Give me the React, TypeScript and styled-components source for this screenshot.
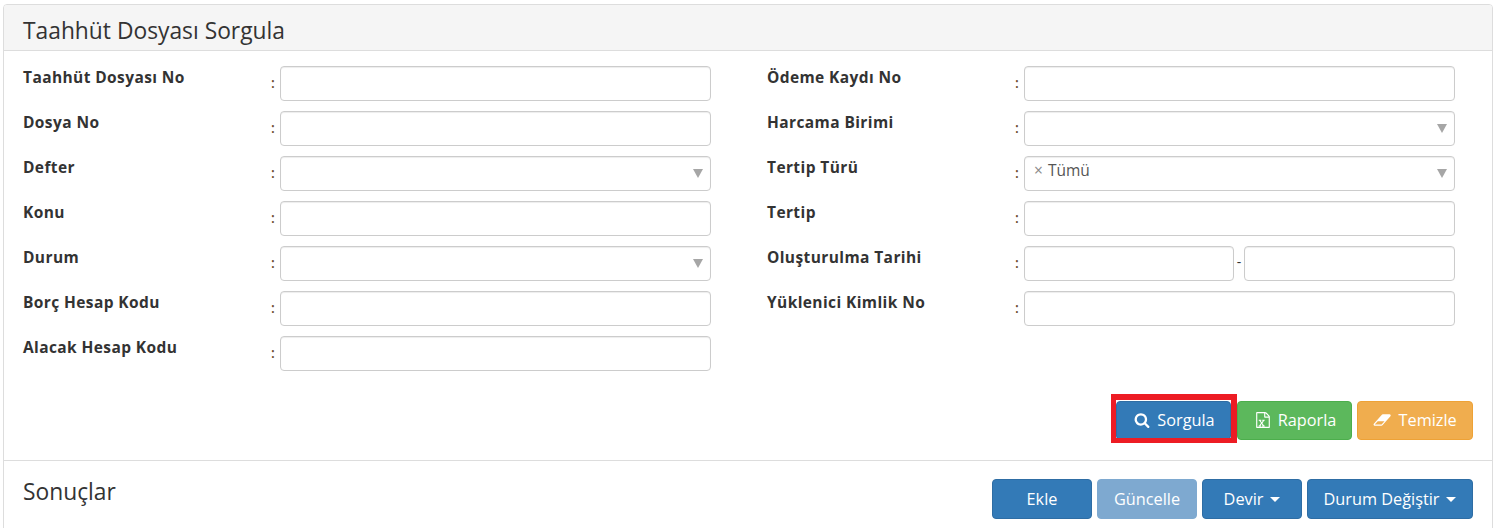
import React from "react";
import styled, { createGlobalStyle } from "styled-components";

const Global = createGlobalStyle`
  html, body { margin: 0; padding: 0; background: #fff; }
  body { font-family: "Open Sans", sans-serif; font-size: 14px; color: #333; overflow: hidden; }
  * { box-sizing: border-box; }
`;

const Panel = styled.div`
  width: 1490px;
  height: 540px;
  margin: 4px 0 0 3px;
  border: 1px solid #ddd;
  border-radius: 4px 4px 0 0;
  background: #fff;
`;
const Heading = styled.div`
  height: 46px;
  padding: 10px 19px 0;
  background: #f5f5f5;
  border-bottom: 1px solid #ddd;
  border-radius: 3px 3px 0 0;
`;
const Title = styled.h3`
  margin: 0;
  font-size: 22.8px;
  line-height: 32px;
  font-weight: 400;
  color: #333;
`;
const FormGrid = styled.div`
  display: grid;
  grid-template-columns: 744px 725px;
  padding: 15px 0 0 19px;
  height: 350px;
`;
const Column = styled.div`
  display: flex;
  flex-direction: column;
  gap: 10px;
`;
const Row = styled.div`
  display: flex;
  align-items: flex-start;
  height: 35px;
`;
const Label = styled.label`
  width: 248px;
  font-size: 15.5px;
  letter-spacing: 0.4px;
  font-weight: 700;
  line-height: 20px;
  padding-top: 1px;
  color: #333;
`;
const Colon = styled.span`
  width: 9px;
  font-size: 14px;
  font-weight: 600;
  line-height: 20px;
  padding-top: 7px;
  color: #6b4a2f;
`;
const Input = styled.div<{ $w?: number }>`
  position: relative;
  flex: 0 0 ${(p) => p.$w ?? 431}px;
  height: 35px;
  border: 1px solid #ccc;
  border-radius: 4px;
  background: #fff;
  box-shadow: inset 0 1px 1px rgba(0, 0, 0, 0.075);
`;
const Arrow = styled.span`
  position: absolute;
  right: 7px;
  top: 12px;
  width: 0;
  height: 0;
  border-left: 5px solid transparent;
  border-right: 5px solid transparent;
  border-top: 9px solid #a6a6a6;
`;
const Tag = styled.span`
  position: absolute;
  left: 9px;
  top: 3px;
  font-size: 15.5px;
  line-height: 20px;
  color: #555;
`;
const TagX = styled.span`
  color: #888;
  margin-right: 5px;
`;
const Dash = styled.span`
  flex: 0 0 10px;
  text-align: center;
  line-height: 20px;
  padding-top: 6px;
  font-size: 14px;
  color: #333;
`;
const Actions = styled.div`
  display: flex;
  justify-content: flex-end;
  gap: 5px;
  padding-right: 19px;
  height: 60px;
  border-bottom: 1px solid #ddd;
`;
const Button = styled.button<{ $bg: string; $line: string; $w: number; $tall?: boolean; $shift?: number }>`
  display: inline-flex;
  align-items: center;
  justify-content: center;
  gap: 7px;
  width: ${(p) => p.$w}px;
  height: ${(p) => (p.$tall ? 40 : 39)}px;
  padding: 0 0 ${(p) => (p.$tall ? 0 : 2)}px ${(p) => p.$shift ?? 0}px;
  background: ${(p) => p.$bg};
  border: 1px solid ${(p) => p.$line};
  border-radius: 4px;
  color: #fff;
  font-family: "Open Sans", sans-serif;
  font-size: 16.3px;
  line-height: 20px;
`;
const Marked = styled.span`
  position: relative;
  display: inline-flex;
  height: 39px;
  margin-right: 1px;
  &::after {
    content: "";
    position: absolute;
    left: -5px;
    top: -7px;
    right: -6px;
    bottom: -3px;
    border: 5px solid #ed1c24;
    border-top-width: 6px;
    border-right-width: 6px;
    pointer-events: none;
  }
`;
const Results = styled.div`
  display: flex;
  justify-content: space-between;
  padding: 18px 19px 0 19px;
`;
const ResultsTitle = styled.h3`
  margin: 0;
  font-size: 22.8px;
  line-height: 26px;
  font-weight: 400;
  color: #333;
`;
const ButtonGroup = styled.div`
  display: flex;
  gap: 5px;
`;
const Caret = styled.span`
  width: 0;
  height: 0;
  margin: 0 0 0 0;
  border-left: 5px solid transparent;
  border-right: 5px solid transparent;
  border-top: 5px solid #fff;
`;

const blue = { $bg: "#337ab7", $line: "#2e6da4" };

const SearchIcon = () => (
  <svg width="16" height="16" viewBox="0 0 1792 1792" fill="#fff">
    <path d="M1216 832q0-185-131.5-316.5t-316.5-131.5-316.5 131.5-131.5 316.5 131.5 316.5 316.5 131.5 316.5-131.5 131.5-316.5zm512 832q0 52-38 90t-90 38q-54 0-90-38l-343-342q-179 124-399 124-143 0-273.5-55.5t-225-150-150-225-55.5-273.5 55.5-273.5 150-225 225-150 273.5-55.5 273.5 55.5 225 150 150 225 55.5 273.5q0 220-124 399l343 343q37 37 37 90z" />
  </svg>
);
const ExcelIcon = () => (
  <svg width="16" height="16" viewBox="0 0 1792 1792" fill="#fff">
    <path d="M1596 380q28 28 48 76t20 88v1152q0 40-28 68t-68 28h-1344q-40 0-68-28t-28-68v-1600q0-40 28-68t68-28h896q40 0 88 20t76 48zm-444-244v376h376q-10-29-22-41l-313-313q-12-12-41-22zm384 1528v-1024h-416q-40 0-68-28t-28-68v-416h-768v1536h1280zm-1128-141v106h281v-106h-75l103-161q5-7 10-16.5t7.5-13.5 3.5-4h2q1 4 5 10 2 4 4.5 7.5t6 8 6.5 8.5l107 161h-76v106h291v-106h-68l-192-273 195-282h67v-107h-279v107h74l-103 159q-4 7-10 16.5t-9 13.5l-2 3h-2q-1-4-5-10-6-11-17-23l-102-159h76v-107h-290v107h68l189 272-194 283h-68z" />
  </svg>
);
const EraserIcon = () => (
  <svg width="18.3" height="16" viewBox="0 0 2048 1792" fill="#fff">
    <path d="M960 1408l336-384h-768l-336 384h768zm1013-1077q15 34 9.5 71.5t-30.5 65.5l-896 1024q-38 44-96 44h-768q-38 0-69.5-20.5t-47.5-54.5q-15-34-9.5-71.5t30.5-65.5l896-1024q38-44 96-44h768q38 0 69.5 20.5t47.5 54.5z" />
  </svg>
);

type F = { label: string; kind?: "select" | "tag" | "range" };
const left: F[] = [
  { label: "Taahhüt Dosyası No" },
  { label: "Dosya No" },
  { label: "Defter", kind: "select" },
  { label: "Konu" },
  { label: "Durum", kind: "select" },
  { label: "Borç Hesap Kodu" },
  { label: "Alacak Hesap Kodu" },
];
const right: F[] = [
  { label: "Ödeme Kaydı No" },
  { label: "Harcama Birimi", kind: "select" },
  { label: "Tertip Türü", kind: "tag" },
  { label: "Tertip" },
  { label: "Oluşturulma Tarihi", kind: "range" },
  { label: "Yüklenici Kimlik No" },
];

const Field = ({ label, kind }: F) => (
  <Row>
    <Label>{label}</Label>
    <Colon>:</Colon>
    {kind === "range" ? (
      <>
        <Input $w={210} />
        <Dash>-</Dash>
        <Input $w={211} />
      </>
    ) : (
      <Input>
        {kind === "tag" && (
          <Tag>
            <TagX>×</TagX>Tümü
          </Tag>
        )}
        {(kind === "select" || kind === "tag") && <Arrow />}
      </Input>
    )}
  </Row>
);

export default function App() {
  return (
    <>
      <Global />
      <Panel>
        <Heading>
          <Title>Taahhüt Dosyası Sorgula</Title>
        </Heading>
        <FormGrid>
          <Column>
            {left.map((f) => (
              <Field key={f.label} {...f} />
            ))}
          </Column>
          <Column>
            {right.map((f) => (
              <Field key={f.label} {...f} />
            ))}
          </Column>
        </FormGrid>
        <Actions>
          <Marked>
            <Button {...blue} $w={115} $shift={2}>
              <SearchIcon />
              Sorgula
            </Button>
          </Marked>
          <Button $bg="#5cb85c" $line="#4cae4c" $w={115} $shift={2}>
            <ExcelIcon />
            Raporla
          </Button>
          <Button $bg="#f0ad4e" $line="#eea236" $w={116}>
            <EraserIcon />
            Temizle
          </Button>
        </Actions>
        <Results>
          <ResultsTitle>Sonuçlar</ResultsTitle>
          <ButtonGroup>
            <Button {...blue} $w={100} $tall>Ekle</Button>
            <Button $bg="#7ea9d0" $line="#7ea9d0" $w={100} $tall>Güncelle</Button>
            <Button {...blue} $w={100} $tall>Devir <Caret /></Button>
            <Button {...blue} $w={166} $tall>Durum Değiştir <Caret /></Button>
          </ButtonGroup>
        </Results>
      </Panel>
    </>
  );
}
